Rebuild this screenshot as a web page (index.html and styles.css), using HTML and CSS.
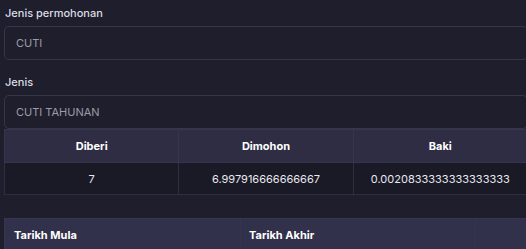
FILE: index.html
```html
<!DOCTYPE html>
<html>
<head>
<meta charset="utf-8">
<link rel="stylesheet" href="styles.css">
</head>
<body>
<div class="page">
  <div class="field">
    <label class="label">Jenis permohonan</label>
    <div class="input">CUTI</div>
  </div>
  <div class="field last">
    <label class="label">Jenis</label>
    <div class="input">CUTI TAHUNAN</div>
  </div>
  <table class="tbl summary">
    <thead>
      <tr><th>Diberi</th><th>Dimohon</th><th>Baki</th></tr>
    </thead>
    <tbody>
      <tr><td>7</td><td>6.997916666666667</td><td>0.0020833333333333333</td></tr>
    </tbody>
  </table>
  <table class="tbl dates">
    <thead>
      <tr><th class="c1">Tarikh Mula</th><th class="c2">Tarikh Akhir</th><th class="c3"></th></tr>
    </thead>
  </table>
</div>
</body>
</html>
```
FILE: styles.css
```css
html, body {
  margin: 0;
  padding: 0;
  background: #1f1e2c;
  overflow: hidden;
}
body {
  font-family: Inter, "Noto Sans", sans-serif;
  font-size: 11px;
  color: #dcdce4;
}
.page {
  width: 524px;
  padding: 5px 0 0 4px;
}
.field {
  margin-bottom: 14px;
}
.field.last {
  margin-bottom: 0;
}
.label {
  display: block;
  line-height: 16px;
  padding-left: 1px;
  margin-bottom: 5px;
  font-weight: 500;
  color: #dcdce4;
}
.input {
  box-sizing: border-box;
  height: 34px;
  border: 1px solid #373645;
  border-radius: 5px;
  padding: 0 11px;
  line-height: 32px;
  color: #9c9ba8;
  font-size: 11px;
}
.tbl {
  width: 524px;
  border-collapse: collapse;
  table-layout: fixed;
}
.tbl th {
  background: #2e2d44;
  color: #ffffff;
  font-weight: 700;
  height: 33px;
  padding: 0 8px;
  border: 1px solid #363550;
  box-sizing: border-box;
}
.tbl td {
  background: #1a1926;
  color: #e8e8ee;
  height: 32px;
  text-align: center;
  border: 1px solid #2f2e3e;
  box-sizing: border-box;
}
.summary th {
  text-align: center;
}
.dates {
  margin-top: 23px;
}
.dates th {
  text-align: left;
  background: #31314b;
}
.dates .c1 { width: 236px; padding-left: 9px; }
.dates .c2 { width: 235px; }
```
